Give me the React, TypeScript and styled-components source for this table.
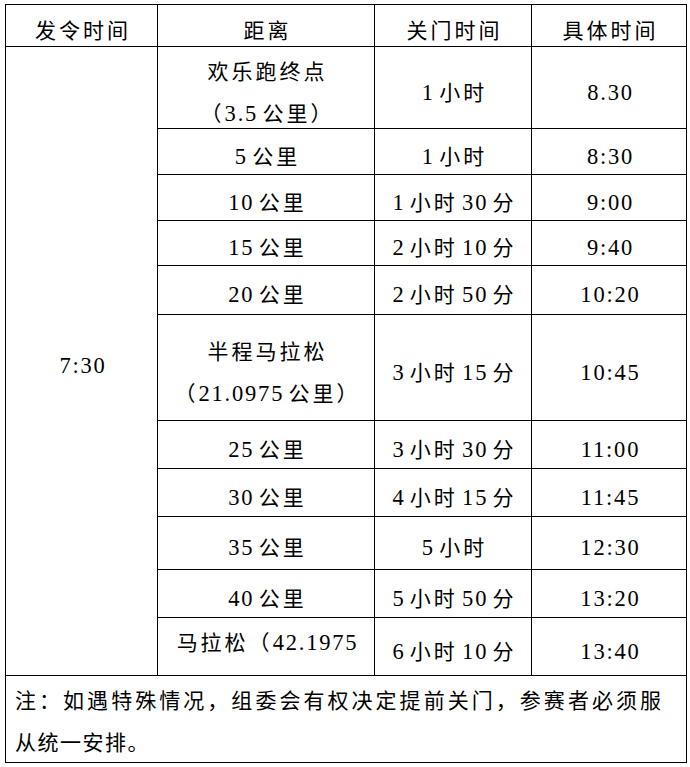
import React from "react";
import styled, { createGlobalStyle } from "styled-components";

interface IRow {
  distance: string[];
  close: string;
  time: string;
  height: number;
  top?: boolean;
}

const rows: IRow[] = [
  { distance: ["欢乐跑终点", "（3.5 公里）"], close: "1 小时", time: "8.30", height: 82 },
  { distance: ["5 公里"], close: "1 小时", time: "8:30", height: 46 },
  { distance: ["10 公里"], close: "1 小时 30 分", time: "9:00", height: 46 },
  { distance: ["15 公里"], close: "2 小时 10 分", time: "9:40", height: 45 },
  { distance: ["20 公里"], close: "2 小时 50 分", time: "10:20", height: 49 },
  { distance: ["半程马拉松", "（21.0975 公里）"], close: "3 小时 15 分", time: "10:45", height: 106 },
  { distance: ["25 公里"], close: "3 小时 30 分", time: "11:00", height: 48 },
  { distance: ["30 公里"], close: "4 小时 15 分", time: "11:45", height: 48 },
  { distance: ["35 公里"], close: "5 小时", time: "12:30", height: 53 },
  { distance: ["40 公里"], close: "5 小时 50 分", time: "13:20", height: 48 },
  { distance: ["马拉松（42.1975"], close: "6 小时 10 分", time: "13:40", height: 58, top: true },
];

const GlobalStyle = createGlobalStyle`
  html, body {
    margin: 0;
    padding: 0;
    background: #fff;
  }
  body {
    font-family: "Liberation Serif", "Noto Sans CJK SC", serif;
    color: #000;
  }
`;

const Page = styled.div`
  padding: 4px 0 0 5px;
`;

const Table = styled.table`
  border-collapse: collapse;
  table-layout: fixed;
  width: 681px;
  font-size: 21px;
  letter-spacing: 3px;
  word-spacing: -4px;
`;

const Row = styled.tr<{ $height: number }>`
  height: ${(p) => p.$height}px;
`;

const Cell = styled.td<{ $top?: boolean }>`
  border: 1px solid #000;
  padding: ${(p) => (p.$top ? "13px 0 0 3px" : "10px 0 0 3px")};
  vertical-align: ${(p) => (p.$top ? "top" : "middle")};
  text-align: center;
  line-height: 24px;
  white-space: nowrap;
  overflow: hidden;
  font-weight: normal;
`;

const HeadCell = styled(Cell).attrs({ as: "th" })``;

const Num = styled.span`
  font-size: 22.5px;
  letter-spacing: 1.8px;
`;

const Lines = styled.div`
  display: flex;
  flex-direction: column;
  gap: 18px;
`;

const NoteCell = styled.td`
  border: 1px solid #000;
  padding: 13px 25px 0 9px;
  vertical-align: top;
  line-height: 24px;
  word-spacing: 0;
`;

const NoteText = styled.div`
  display: flex;
  flex-direction: column;
  gap: 18px;
`;

const NoteLine = styled.span<{ $justify?: boolean }>`
  display: block;
  white-space: ${(p) => (p.$justify ? "normal" : "nowrap")};
  letter-spacing: ${(p) => (p.$justify ? "0" : "1.5px")};
  text-align: ${(p) => (p.$justify ? "justify" : "left")};
  text-align-last: ${(p) => (p.$justify ? "justify" : "left")};
  text-justify: inter-character;
`;

// digits are set a touch larger, like the Times figures in the original
const withNums = (text: string) =>
  text.split(/([0-9][0-9.:]*)/).map((part, i) =>
    /^[0-9]/.test(part) ? <Num key={i}>{part}</Num> : part
  );

const App = () => {
  return (
    <Page>
      <GlobalStyle />
      <Table>
        <colgroup>
          <col style={{ width: 152 }} />
          <col style={{ width: 217 }} />
          <col style={{ width: 157 }} />
          <col style={{ width: 155 }} />
        </colgroup>
        <thead>
          <Row $height={42}>
            <HeadCell>发令时间</HeadCell>
            <HeadCell>距离</HeadCell>
            <HeadCell>关门时间</HeadCell>
            <HeadCell>具体时间</HeadCell>
          </Row>
        </thead>
        <tbody>
          {rows.map((row, i) => (
            <Row key={i} $height={row.height}>
              {i === 0 && <Cell rowSpan={rows.length}>{withNums("7:30")}</Cell>}
              <Cell $top={row.top}>
                {row.distance.length > 1 ? (
                  <Lines>
                    {row.distance.map((line) => (
                      <span key={line}>{withNums(line)}</span>
                    ))}
                  </Lines>
                ) : (
                  withNums(row.distance[0])
                )}
              </Cell>
              <Cell>{withNums(row.close)}</Cell>
              <Cell>{withNums(row.time)}</Cell>
            </Row>
          ))}
          <Row $height={87}>
            <NoteCell colSpan={4}>
              <NoteText>
                <NoteLine $justify>注：如遇特殊情况，组委会有权决定提前关门，参赛者必须服</NoteLine>
                <NoteLine>从统一安排。</NoteLine>
              </NoteText>
            </NoteCell>
          </Row>
        </tbody>
      </Table>
    </Page>
  );
};

export default App;
